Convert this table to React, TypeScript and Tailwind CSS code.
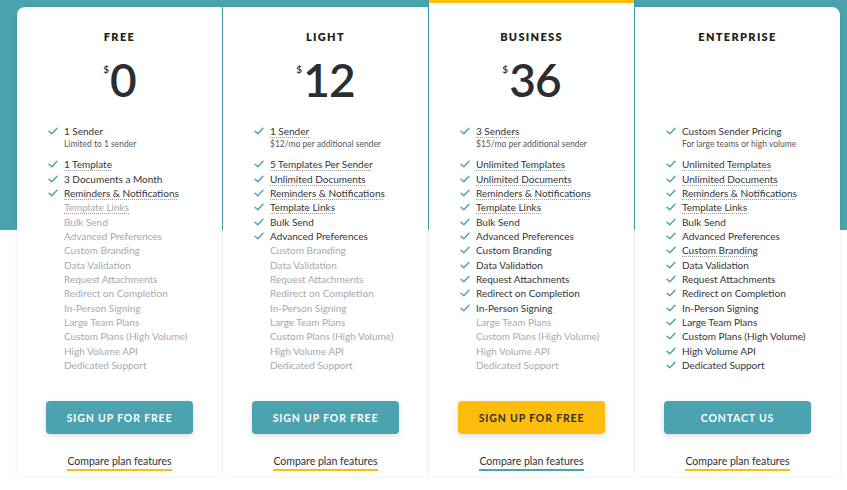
import React from 'react';

type Feature = { label: string; on: boolean; dotted?: boolean };

type Plan = {
    name: string;
    price?: string;
    seat: string;
    seatDotted?: boolean;
    seatNote: string;
    features: Feature[];
    cta: string;
    featured?: boolean;
};

// Everything after the first four rows is the same across plans,
// only the number of included items changes.
const REST = [
    'Bulk Send',
    'Advanced Preferences',
    'Custom Branding',
    'Data Validation',
    'Request Attachments',
    'Redirect on Completion',
    'In-Person Signing',
    'Large Team Plans',
    'Custom Plans (High Volume)',
    'High Volume API',
    'Dedicated Support',
];

const buildFeatures = (first: Feature[], onCount: number, dotted: string[] = []): Feature[] => [
    ...first,
    ...REST.map((label, i) => ({ label, on: i < onCount, dotted: dotted.includes(label) })),
];

const unlimited: Feature[] = [
    { label: 'Unlimited Templates', on: true, dotted: true },
    { label: 'Unlimited Documents', on: true, dotted: true },
    { label: 'Reminders & Notifications', on: true, dotted: true },
    { label: 'Template Links', on: true, dotted: true },
];

const PLANS: Plan[] = [
    {
        name: 'FREE',
        price: '0',
        seat: '1 Sender',
        seatNote: 'Limited to 1 sender',
        features: buildFeatures(
            [
                { label: '1 Template', on: true, dotted: true },
                { label: '3 Documents a Month', on: true },
                { label: 'Reminders & Notifications', on: true, dotted: true },
                { label: 'Template Links', on: false, dotted: true },
            ],
            0
        ),
        cta: 'SIGN UP FOR FREE',
    },
    {
        name: 'LIGHT',
        price: '12',
        seat: '1 Sender',
        seatDotted: true,
        seatNote: '$12/mo per additional sender',
        features: buildFeatures(
            [
                { label: '5 Templates Per Sender', on: true, dotted: true },
                { label: 'Unlimited Documents', on: true, dotted: true },
                { label: 'Reminders & Notifications', on: true, dotted: true },
                { label: 'Template Links', on: true, dotted: true },
            ],
            2
        ),
        cta: 'SIGN UP FOR FREE',
    },
    {
        name: 'BUSINESS',
        price: '36',
        seat: '3 Senders',
        seatDotted: true,
        seatNote: '$15/mo per additional sender',
        features: buildFeatures(unlimited, 7),
        cta: 'SIGN UP FOR FREE',
        featured: true,
    },
    {
        name: 'ENTERPRISE',
        seat: 'Custom Sender Pricing',
        seatNote: 'For large teams or high volume',
        features: buildFeatures(unlimited, 11, ['Custom Branding']),
        cta: 'CONTACT US',
    },
];

function Check({ visible }: { visible: boolean }) {
    return (
        <span className="flex w-[10px] shrink-0 justify-center">
            {visible && (
                <svg width="10" height="8" viewBox="0 0 10 8" fill="none">
                    <path d="M1 4.2L3.8 6.8L9 1.2" stroke="#4aa3ae" strokeWidth="1.4" strokeLinecap="round" strokeLinejoin="round" />
                </svg>
            )}
        </span>
    );
}

function FeatureLabel({ label, on, dotted }: Feature) {
    return (
        <span
            className={
                (on ? 'text-[#333438]' : 'text-[#a7a9ac]') +
                (dotted ? ' underline decoration-dotted decoration-[#9a9ca0] underline-offset-[2px]' : '')
            }
        >
            {label}
        </span>
    );
}

function PlanCard({ plan }: { plan: Plan }) {
    return (
        <div
            className={
                'flex w-[205px] flex-col items-stretch bg-white shadow-[0_0_4px_rgba(0,0,0,0.08)] ' +
                (plan.featured
                    ? 'h-[476px] border-t-[3px] border-[#fcbd0c] pt-[27px]'
                    : 'mt-[7px] h-[469px] pt-[23px]') +
                (plan.name === 'FREE' ? ' rounded-tl-[8px]' : '') +
                (plan.name === 'ENTERPRISE' ? ' rounded-tr-[8px]' : '')
            }
        >
            <div className="text-center text-[11px] font-extrabold leading-[14px] tracking-[0.12em] text-[#231f20]">
                {plan.name}
            </div>

            {/* Price */}
            <div className="mt-[13px] flex h-[46px] items-start justify-center text-[#2b2d31]">
                {plan.price && (
                    <>
                        <span className="mt-[7px] mr-px text-[10px] font-semibold leading-[10px]">$</span>
                        <span className="text-[46px] font-semibold leading-[46px] tracking-[-0.02em]">{plan.price}</span>
                    </>
                )}
            </div>

            {/* Features */}
            <div className="mt-[21px] pl-[31px] text-[10px] leading-[14px]">
                <div className="flex items-center gap-[6px]">
                    <Check visible />
                    <FeatureLabel label={plan.seat} on dotted={plan.seatDotted} />
                </div>
                <div className="pl-[16px] text-[8.5px] leading-[12px] text-[#55575b]">{plan.seatNote}</div>

                <div className="mt-[7px] flex flex-col">
                    {plan.features.map((f) => (
                        <div key={f.label} className="flex h-[14.36px] items-center gap-[6px]">
                            <Check visible={f.on} />
                            <FeatureLabel {...f} />
                        </div>
                    ))}
                </div>
            </div>

            <button
                className={
                    'mx-auto mt-[29px] flex h-[33px] w-[147px] items-center justify-center rounded-[4px] pt-px text-[10.5px] font-bold tracking-[0.08em] shadow-[0_2px_6px_rgba(0,0,0,0.14)] ' +
                    (plan.featured ? 'bg-[#fcbd0c] text-[#2f2f33]' : 'bg-[#4aa3ae] text-white')
                }
            >
                {plan.cta}
            </button>

            <div className="mt-[13px] text-center">
                <span
                    className={
                        'inline-block border-b-2 pb-px text-[10.5px] leading-[14px] text-[#2f3033] ' +
                        (plan.featured ? 'border-[#4aa3ae]' : 'border-[#fcbd0c]')
                    }
                >
                    Compare plan features
                </span>
            </div>
        </div>
    );
}

export default function App() {
    return (
        <div
            className="h-[490px] w-[847px] overflow-hidden bg-[linear-gradient(#4aa3ae_230px,#ffffff_230px)]"
            style={{ fontFamily: 'Lato, "Open Sans", sans-serif' }}
        >
            <div className="flex items-start gap-px pl-[17px]">
                {PLANS.map((plan) => (
                    <PlanCard key={plan.name} plan={plan} />
                ))}
            </div>
        </div>
    );
}
